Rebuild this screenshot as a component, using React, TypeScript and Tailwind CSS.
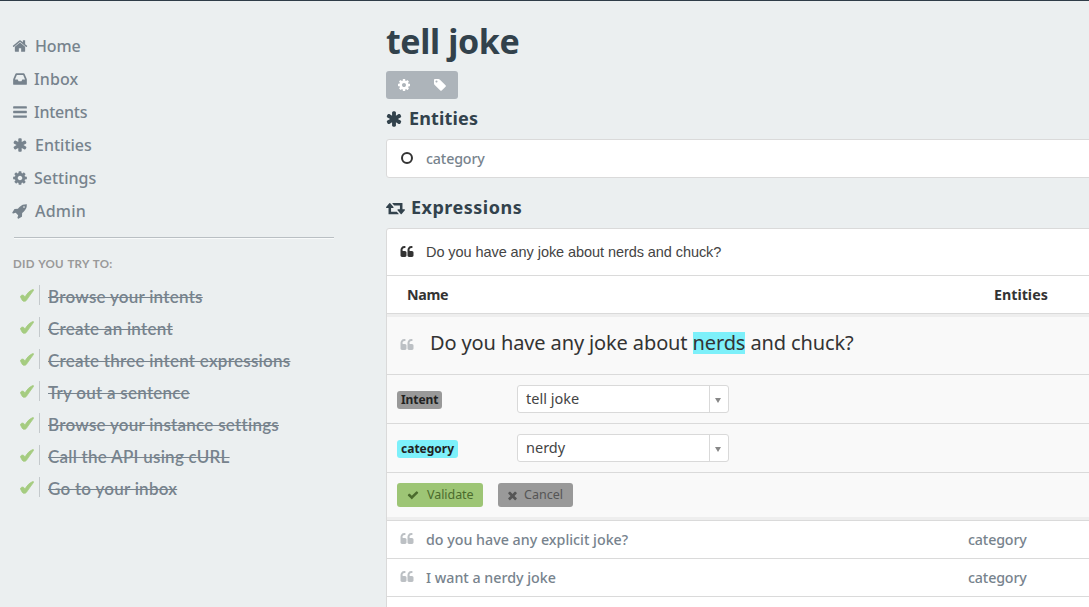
import React from "react";

const icons = {
  home: "M1472 992v480q0 26-19 45t-45 19h-384v-384h-256v384h-384q-26 0-45-19t-19-45v-480q0-1 .5-3t.5-3l575-474 575 474q1 2 1 6zm223-69l-62 74q-8 9-21 11h-3q-13 0-21-7l-692-577-692 577q-12 8-24 7-13-2-21-11l-62-74q-8-10-7-23.5t11-21.5l719-599q32-26 76-26t76 26l244 204v-195q0-14 9-23t23-9h192q14 0 23 9t9 23v408l219 182q10 8 11 21.5t-7 23.5z",
  inbox: "M1151 960h316q-1-3-2.5-8.5t-2.5-7.5l-212-496h-708l-212 496q-1 3-2.5 8.5t-2.5 7.5h316l95 192h320zm513 30v482q0 26-19 45t-45 19h-1408q-26 0-45-19t-19-45v-482q0-62 25-123l238-552q10-25 36.5-42t52.5-17h832q26 0 52.5 17t36.5 42l238 552q25 61 25 123z",
  bars: "M1664 1344v128q0 26-19 45t-45 19h-1408q-26 0-45-19t-19-45v-128q0-26 19-45t45-19h1408q26 0 45 19t19 45zm0-512v128q0 26-19 45t-45 19h-1408q-26 0-45-19t-19-45v-128q0-26 19-45t45-19h1408q26 0 45 19t19 45zm0-512v128q0 26-19 45t-45 19h-1408q-26 0-45-19t-19-45v-128q0-26 19-45t45-19h1408q26 0 45 19t19 45z",
  asterisk: "M1546 1050q46 26 59.5 77.5t-12.5 97.5l-64 110q-26 46-77.5 59.5t-97.5-12.5l-266-153v307q0 52-38 90t-90 38h-128q-52 0-90-38t-38-90v-307l-266 153q-46 26-97.5 12.5t-77.5-59.5l-64-110q-26-46-12.5-97.5t59.5-77.5l266-154-266-154q-46-26-59.5-77.5t12.5-97.5l64-110q26-46 77.5-59.5t97.5 12.5l266 153v-307q0-52 38-90t90-38h128q52 0 90 38t38 90v307l266-153q46-26 97.5-12.5t77.5 59.5l64 110q26 46 12.5 97.5t-59.5 77.5l-266 154z",
  cog: "M1152 896q0-106-75-181t-181-75-181 75-75 181 75 181 181 75 181-75 75-181zm512-109v222q0 12-8 23t-20 13l-185 28q-19 54-39 91 35 50 107 138 10 12 10 25t-9 23q-27 37-99 108t-94 71q-12 0-26-9l-138-108q-44 23-91 38-16 136-29 186-7 28-36 28h-222q-14 0-24.5-8.5t-11.5-21.5l-28-184q-49-16-90-37l-141 107q-10 9-25 9-14 0-25-11-126-114-165-168-7-10-7-23 0-12 8-23 15-21 51-66.5t54-70.5q-27-50-41-99l-183-27q-13-2-21-12.5t-8-23.5v-222q0-12 8-23t19-13l186-28q14-46 39-92-40-57-107-138-10-12-10-24 0-10 9-23 26-36 98.5-107.5t94.5-71.5q13 0 26 10l138 107q44-23 91-38 16-136 29-186 7-28 36-28h222q14 0 24.5 8.5t11.5 21.5l28 184q49 16 90 37l142-107q9-9 24-9 13 0 25 10 129 119 165 170 7 8 7 22 0 12-8 23-15 21-51 66.5t-54 70.5q26 50 41 98l183 28q13 2 21 12.5t8 23.5z",
  rocket: "M1440 448q0-40-28-68t-68-28-68 28-28 68 28 68 68 28 68-28 28-68zm224-288q0 249-75.5 430.5t-253.5 360.5q-81 80-195 176l-20 379q-2 16-16 26l-384 224q-7 4-16 4-12 0-23-9l-64-64q-13-14-8-32l85-276-281-281-276 85q-3 1-9 1-14 0-23-9l-64-64q-17-19-5-39l224-384q10-14 26-16l379-20q96-114 176-195 188-187 358-258t431-71q14 0 24 9.5t10 22.5z",
  tag: "M576 448q0-53-37.5-90.5t-90.5-37.5-90.5 37.5-37.5 90.5 37.5 90.5 90.5 37.5 90.5-37.5 37.5-90.5zm1067 576q0 53-37 90l-491 492q-39 37-91 37-53 0-90-37l-715-716q-38-37-64.5-101t-26.5-117v-416q0-52 38-90t90-38h416q53 0 117 26.5t102 64.5l715 714q37 39 37 91z",
  check: "M1671 566q0 40-28 68l-724 724-136 136q-28 28-68 28t-68-28l-136-136-362-362q-28-28-28-68t28-68l136-136q28-28 68-28t68 28l294 295 656-657q28-28 68-28t68 28l136 136q28 28 28 68z",
  times: "M1490 1322q0 40-28 68l-136 136q-28 28-68 28t-68-28l-294-294-294 294q-28 28-68 28t-68-28l-136-136q-28-28-28-68t28-68l294-294-294-294q-28-28-28-68t28-68l136-136q28-28 68-28t68 28l294 294 294-294q28-28 68-28t68 28l136 136q28 28 28 68t-28 68l-294 294 294 294q28 28 28 68z",
  quote: "M832 960v384q0 80-56 136t-136 56h-384q-80 0-136-56t-56-136v-704q0-104 40.5-198.5t109.5-163.5 163.5-109.5 198.5-40.5h64q26 0 45 19t19 45v128q0 26-19 45t-45 19h-64q-106 0-181 75t-75 181v32q0 40 28 68t68 28h224q80 0 136 56t56 136zm896 0v384q0 80-56 136t-136 56h-384q-80 0-136-56t-56-136v-704q0-104 40.5-198.5t109.5-163.5 163.5-109.5 198.5-40.5h64q26 0 45 19t19 45v128q0 26-19 45t-45 19h-64q-106 0-181 75t-75 181v32q0 40 28 68t68 28h224q80 0 136 56t56 136z",
  retweet: "M1216 1504q0 13-9.5 22.5t-22.5 9.5h-960q-8 0-13.5-2t-9-7-5.5-8-3-11.5-1-11.5v-600h-192q-26 0-45-19t-19-45q0-24 15-41l320-384q19-22 49-22t49 22l320 384q15 17 15 41 0 26-19 45t-45 19h-192v384h576q16 0 25 11l160 192q7 10 7 21zm640-416q0 24-15 41l-320 384q-20 23-49 23t-49-23l-320-384q-15-17-15-41 0-26 19-45t45-19h192v-384h-576q-16 0-25-12l-160-192q-7-9-7-20 0-13 9.5-22.5t22.5-9.5h960q8 0 13.5 2t9 7 5.5 8 3 11.5 1 11.5v600h192q26 0 45 19t19 45z",
};

type IconName = keyof typeof icons;

function Icon({ name, className, viewBox = "0 0 1792 1792" }: { name: IconName; className: string; viewBox?: string }) {
  return (
    <svg viewBox={viewBox} fill="currentColor" className={`shrink-0 ${className}`} aria-hidden="true">
      <path d={icons[name]} />
    </svg>
  );
}

const nav: { icon: IconName; label: string; text: string }[] = [
  { icon: "home", label: "Home", text: "pl-[7px] tracking-[-0.15px]" },
  { icon: "inbox", label: "Inbox", text: "pl-[6px] tracking-[0.1px]" },
  { icon: "bars", label: "Intents", text: "pl-[6px] tracking-[-0.25px]" },
  { icon: "asterisk", label: "Entities", text: "pl-[7px]" },
  { icon: "cog", label: "Settings", text: "pl-[6px]" },
  { icon: "rocket", label: "Admin", text: "pl-[7px] tracking-[0.2px]" },
];

const tasks = [
  "Browse your intents",
  "Create an intent",
  "Create three intent expressions",
  "Try out a sentence",
  "Browse your instance settings",
  "Call the API using cURL",
  "Go to your inbox",
];

function Sidebar() {
  return (
    <aside className="w-[386px] shrink-0 pt-[28px] pl-[12px] text-[#77838d]">
      <nav>
        {nav.map((n) => (
          <a key={n.label} className="flex h-[33px] items-center">
            <Icon name={n.icon} className="size-[16px]" />
            <span className={`text-[16px] font-medium whitespace-nowrap ${n.text}`}>{n.label}</span>
          </a>
        ))}
      </nav>
      <div className="mt-[10px] ml-[2px] h-[2px] w-[320px] border-t border-[#b9bfc3] bg-[#f8fafa]" />
      <h6 className="mt-[16px] ml-px h-[18px] font-[Lato,sans-serif] text-[11.5px] leading-[18px] font-bold tracking-[0.25px] [word-spacing:1px] text-[#999]">DID YOU TRY TO:</h6>
      <ul className="mt-[9px] ml-px">
        {tasks.map((t) => (
          <li key={t} className="flex h-8 items-start pl-[7px]">
            <span className="w-[19px] pt-[7px]">
              <svg viewBox="0 0 14 13" className="h-[13px] w-[14px] text-[#a5cc80]" fill="currentColor" stroke="currentColor" strokeWidth="0.8" strokeLinejoin="round" aria-hidden="true">
                <path d="M.7 7C1.6 5.9 3.6 5.7 4.1 6.9L4.9 8.2C7 4.6 9.5 1.7 12.8.6c.8-.2.9.4.6 1C10.8 4.9 8.7 8.2 6.5 11.2 5.6 12.6 2.9 12.8 2.2 11.2L.7 8.4Q.3 7.6.7 7z" />
              </svg>
            </span>
            <span className="mt-[3px] h-5 w-px bg-[#c4c9cc]" />
            <span className="pt-[3px] pl-[8px] font-[Lato,sans-serif] text-[17px] leading-[24px] font-semibold tracking-[0.25px] whitespace-nowrap line-through decoration-1">{t}</span>
          </li>
        ))}
      </ul>
    </aside>
  );
}

function Select({ value }: { value: string }) {
  return (
    <div className="flex h-[28px] w-[212px] rounded-[3px] border border-[#d9d9d9] bg-white">
      <span className="flex-1 pl-2 text-[14.5px] leading-[25px] text-[#444]">{value}</span>
      <span className="flex w-[19px] items-center justify-center border-l border-[#d9d9d9] pt-[2px] pr-[2px]">
        <svg viewBox="0 0 6 5" className="h-[5px] w-[6px]" fill="#888"><path d="M0 0h6L3 5z" /></svg>
      </span>
    </div>
  );
}

function ExpressionRow({ text }: { text: string }) {
  return (
    <div className="flex h-[38px] items-center border-b border-[#dadada] pl-[13px] text-[14.25px] font-medium text-[#77838d]">
      <Icon name="quote" className="mb-px size-[14px] text-[#bcc0c4]" />
      <span className="w-[554px] pl-[12px]">{text}</span>
      <span className="tracking-[-0.15px]">category</span>
    </div>
  );
}

export default function App() {
  return (
    <div className="flex h-[607px] w-[1089px] overflow-hidden border-t border-[#2f3c48] bg-[#ebeff0] font-['Noto_Sans',sans-serif]">
      <Sidebar />
      <main className="w-[703px] shrink-0 text-[#32424c]">
        <h1 className="mt-[17px] h-[46px] text-[34px] leading-[46px] font-bold tracking-[-0.4px] whitespace-nowrap">tell joke</h1>
        <div className="mt-[7px] flex h-[28px] w-[72px] items-center justify-around rounded-[3px] bg-[#adb4ba] text-white">
          <Icon name="cog" className="size-[14px]" />
          <Icon name="tag" className="size-[14px]" />
        </div>
        <h2 className="mt-[6px] flex h-[27px] items-center text-[18px] font-bold">
          <Icon name="asterisk" className="-ml-px size-[18px]" />
          <span className="pl-[6px] tracking-[0.15px]">Entities</span>
        </h2>
        <div className="mt-[7px] flex h-[39px] w-[720px] items-center rounded-[3px] border border-[#dadada] bg-white pl-[14px]">
          <span className="mb-px size-[12px] rounded-full border-2 border-[#333]" />
          <span className="pl-[13px] text-[14.25px] font-medium tracking-[-0.15px] text-[#77838d]">category</span>
        </div>
        <h2 className="mt-[16px] flex h-[27px] items-center text-[18px] font-bold">
          <Icon name="retweet" viewBox="-64 0 1920 1792" className="h-[18px] w-[19px]" />
          <span className="pl-[6px] tracking-[0.5px]">Expressions</span>
        </h2>
        <section className="mt-[7px] h-[400px] w-[720px] rounded-t-[3px] border border-[#dadada] bg-white">
          <div className="flex h-[47px] items-center border-b border-[#dadada] pl-[13px]">
            <Icon name="quote" className="size-[14px] text-[#333]" />
            <span className="pt-px pl-[12px] font-['Liberation_Sans',sans-serif] text-[14.5px] tracking-[-0.07px] text-[#444]">Do you have any joke about nerds and chuck?</span>
          </div>
          <div className="flex h-[38px] items-center border-b border-[#dadada] pl-[20px] text-[14.25px] font-bold text-[#333]">
            <span className="w-[587px] tracking-[-0.35px]">Name</span>
            <span>Entities</span>
          </div>
          <div className="h-[207px] border-t-[3px] border-b border-t-[#eee] border-b-[#dadada] bg-[#f9f9f9]">
            <div className="flex h-[58px] items-center border-b border-[#dadada] pb-[5px] pl-[13px]">
              <Icon name="quote" className="mt-[3px] size-[14px] text-[#bcc0c4]" />
              <span className="pl-[16px] text-[20px] leading-[22px] tracking-[-0.12px] whitespace-nowrap text-[#333]">
                Do you have any joke about <mark className="inline-block h-[22px] bg-[#7df0fa] text-[#333]">nerds</mark> and chuck?
              </span>
            </div>
            <div className="flex h-[49px] items-center border-b border-[#dadada] pl-[10px]">
              <div className="flex w-[120px] pt-[2px]"><span className="h-[18px] rounded-[3px] bg-[#999] px-1 text-[12px] leading-[17px] font-bold tracking-[-0.1px] text-[#222]">Intent</span></div>
              <Select value="tell joke" />
            </div>
            <div className="flex h-[49px] items-center border-b border-[#dadada] pl-[10px]">
              <div className="flex w-[120px] pt-[2px]"><span className="h-[18px] rounded-[3px] bg-[#7df0fa] px-1 text-[12px] leading-[17px] font-bold text-[#222]">category</span></div>
              <Select value="nerdy" />
            </div>
            <div className="flex h-[47px] items-start gap-[15px] border-b-[3px] border-[#eee] pt-[10px] pl-[10px] text-[12.5px]">
              <button className="flex h-[24px] w-[86px] items-center rounded-[3px] bg-[#9dc575] pl-[10px] text-[#4b6b2d]">
                <Icon name="check" className="size-[12px]" /><span className="pl-[8px] tracking-[-0.05px]">Validate</span>
              </button>
              <button className="flex h-[24px] w-[75px] items-center rounded-[3px] bg-[#999] pl-[8px] text-[#555]">
                <Icon name="times" className="size-[13px]" /><span className="pl-[5px]">Cancel</span>
              </button>
            </div>
          </div>
          <ExpressionRow text="do you have any explicit joke?" />
          <ExpressionRow text="I want a nerdy joke" />
        </section>
      </main>
    </div>
  );
}
